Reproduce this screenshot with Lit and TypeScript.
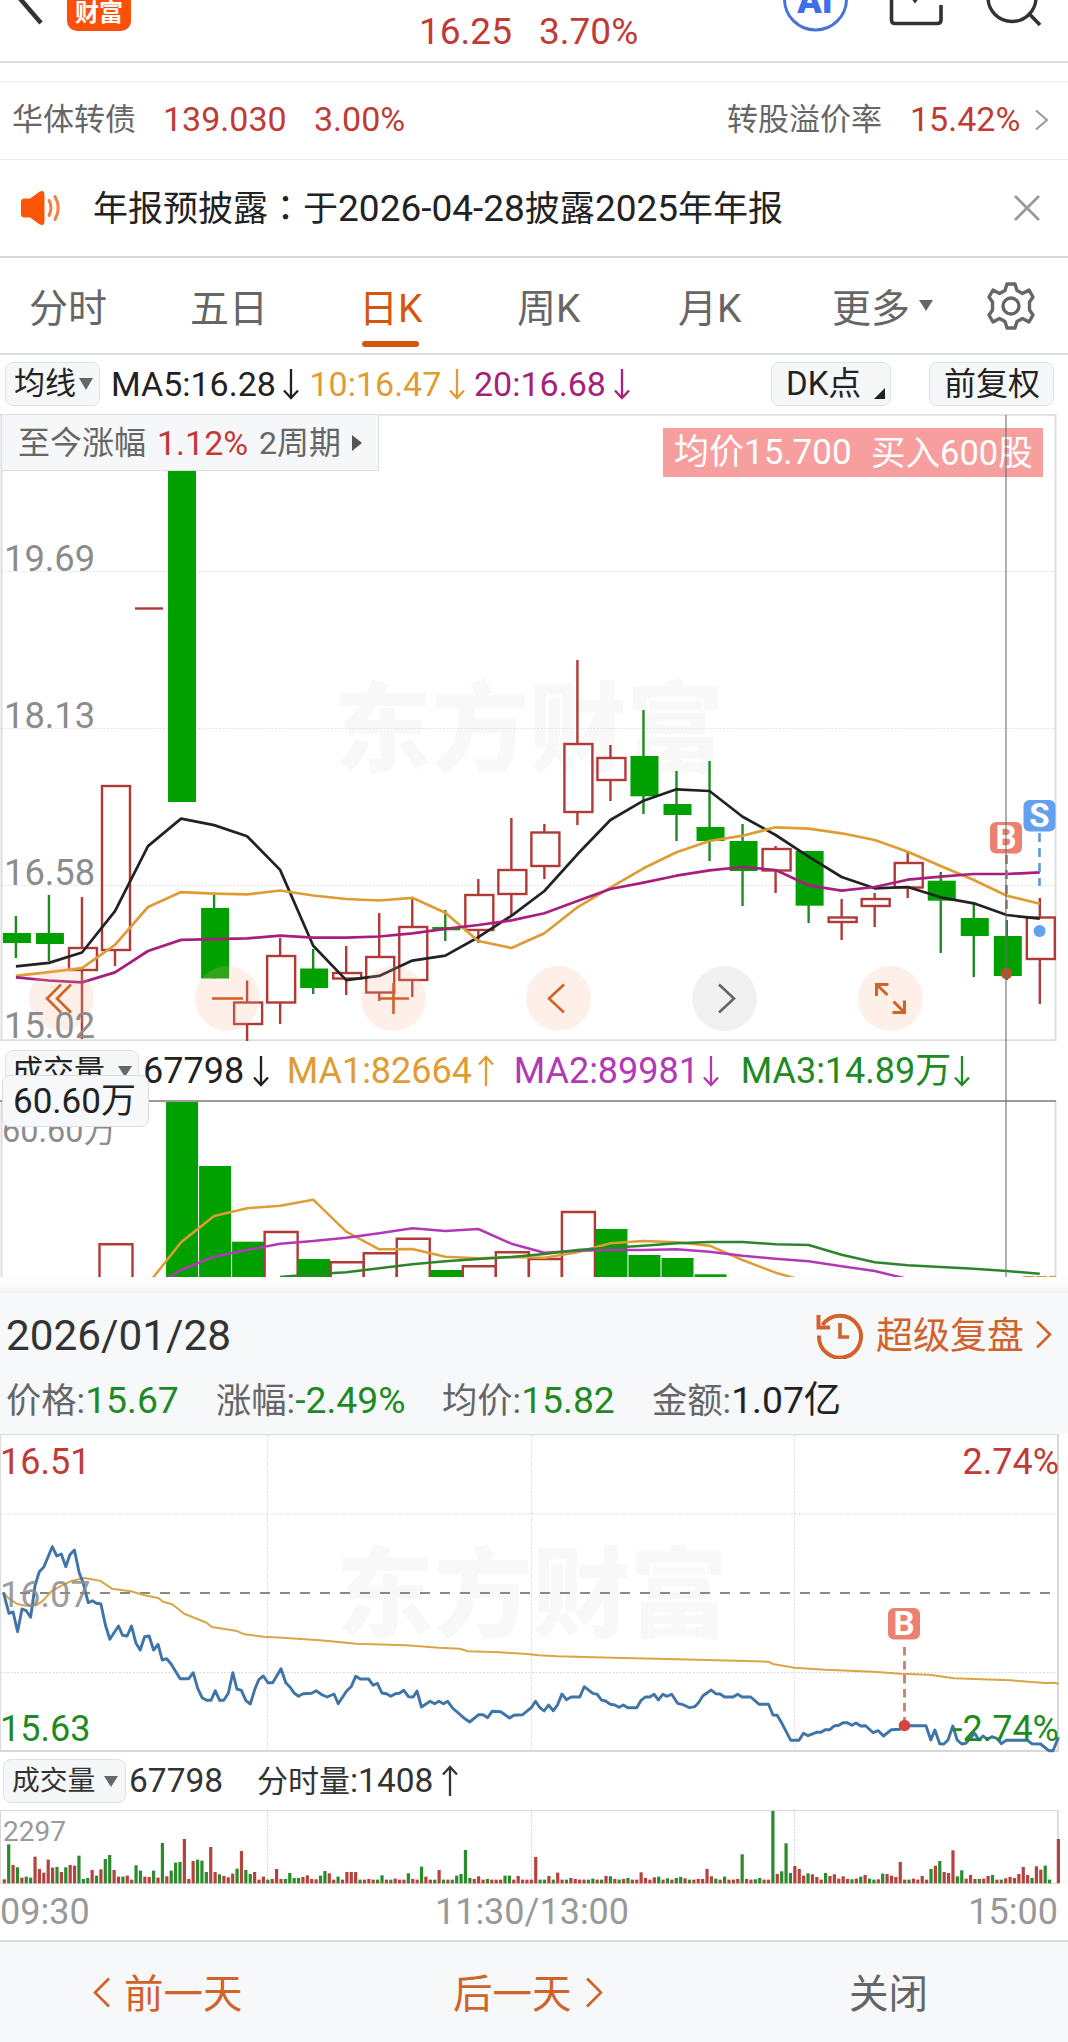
import { LitElement, html, svg, css } from "lit";
import { customElement } from "lit/decorators.js";

const RED = "#b03a37";
const GREEN = "#00a000";
const DEEP_GREEN = "#1f8a24";
const ORANGE = "#df9c35";
const MAGENTA = "#a81f7b";
const PURPLE = "#b338b8";

const STEP = 33.03;
const FIRST = 15.9;
const cx = (i: number) => FIRST + STEP * i;

type Candle = [up: 0 | 1, high: number, top: number, bottom: number, low: number];

const candles: Candle[] = [
  [0, 916, 933, 943, 958], [0, 895, 933, 944, 961], [1, 897, 948, 970, 1039], [1, 786, 786, 950, 966],
  [1, 608.5, 608.5, 608.5, 608.5], [0, 471, 471, 802, 802], [0, 895, 908, 978.5, 978.5], [1, 980.5, 1002.5, 1024, 1041],
  [1, 938, 956, 1002.5, 1024], [0, 949, 968.5, 988, 994], [1, 946, 973, 978.5, 995], [1, 913, 957, 992.5, 1001],
  [1, 897, 927, 980, 997], [0, 910, 927, 930.3, 941], [1, 879, 895, 930, 943], [1, 818, 870, 894, 915],
  [1, 824, 832.5, 866, 879], [1, 660, 744, 812, 825], [1, 745, 758, 780, 801], [0, 710, 756, 796.3, 814],
  [0, 771, 804, 815, 841], [0, 761, 827, 841, 861], [0, 824, 841, 871, 906], [1, 846, 849, 870.5, 893],
  [0, 851, 851, 905.7, 923], [1, 899, 917.5, 922, 940], [1, 893, 899, 906, 927], [1, 852, 863, 887.5, 898],
  [0, 872, 880.7, 900.7, 953], [0, 903, 918, 936, 977], [0, 920, 936, 976, 980], [1, 898, 917.5, 959, 1004],
];

const ma5 = [966.3, 962.9, 952.5, 911.2, 846.1, 818.6, 825.1, 836.2, 869.9, 945.7, 980.1, 975.9, 960.6, 955.6, 937.2, 915.8, 891, 854.3, 820, 800.7, 789.3, 791, 816.7, 835, 856.7, 877, 888.3, 887, 897.3, 903.3, 915, 918.7];
const ma10 = [975.9, 972.1, 968.2, 944.9, 907, 892.1, 893.6, 894.4, 890.5, 895.5, 899, 900.5, 897.8, 912.7, 941, 948, 933.3, 907.3, 887.7, 868.3, 852.3, 841, 835.7, 827.3, 828.7, 833.3, 840, 851.7, 866, 880, 895.7, 903.7];
const ma20 = [977.4, 980.5, 982.4, 972.4, 951, 939.9, 939.1, 938.4, 935.7, 937.6, 937.6, 936.5, 933.4, 928.8, 925, 920.4, 913.3, 901, 889, 882.7, 875.7, 870.3, 867, 870, 885.3, 890.7, 887, 879.7, 876.7, 874, 874, 872.3];

const volumeBars: [index: number, up: 0 | 1, top: number][] = [
  [3, 1, 1244.3], [5, 0, 1101], [6, 0, 1166], [7, 0, 1241.7], [8, 1, 1232], [9, 0, 1259], [10, 1, 1262.3],
  [11, 1, 1253.3], [12, 1, 1238.7], [13, 0, 1270], [14, 1, 1266.3], [15, 1, 1252.3], [16, 1, 1259], [17, 1, 1212],
  [18, 0, 1229], [19, 0, 1255], [20, 0, 1258], [21, 0, 1274.3],
];
const volMa1 = [1284, 1242.3, 1216, 1208.3, 1205.7, 1199.7, 1231.7, 1249.3, 1249, 1256.7, 1258.3, 1257, 1257.7, 1252.3, 1243.3, 1241, 1242.3, 1245.7, 1260, 1272.7, 1282];
const volMa2 = [1290, 1270, 1256.7, 1250, 1243.7, 1241, 1237.7, 1233.3, 1228.3, 1231, 1229, 1243.7, 1252.7, 1250.7, 1250, 1250, 1249.3, 1251.7, 1255.7, 1258.7, 1261.3, 1266.3, 1271, 1279];
const volMa3 = [1277, 1274.3, 1272.3, 1268.3, 1264.3, 1261.3, 1259, 1257, 1254, 1250, 1247.7, 1245.7, 1243.3, 1242, 1242, 1244.3, 1245, 1254.7, 1262.3, 1265.3, 1267, 1268.7, 1271, 1273.7];

const series = (values: number[], start = 0) => values.map((y, k) => `${cx(k + start).toFixed(1)},${y}`).join(" ");

/* Intraday samples: morning and afternoon halves, in thirds of a pixel. */
const scaled = (data: string, kx: number, dx: number) =>
  data.trim().split(/\s+/).map((p) => {
    const [x, y] = p.split(",").map(Number);
    return `${(x / kx + dx).toFixed(1)},${(1430 + y / 3).toFixed(1)}`;
  }).join(" ");

const priceAm = `10,487 26,550 38,546 51,605 64,537 76,542 89,562 102,466 114,425 127,412 152,350 165,378 178,372 191,410 203,374 216,360 230,428 242,460 256,518 268,512 280,520 293,522 306,585 319,628 344,588 356,616 369,618 382,588 395,640 407,660 420,620 433,618 446,660 459,643 471,690 484,686 497,702 523,746 548,746 561,728 574,775 587,803 600,811 613,811 625,782 638,811 650,811 663,790 676,728 688,777 701,781 714,812 727,822 740,778 752,748 765,738 778,758 792,758 816,716 830,758 842,771 855,790 867,799 880,791 905,790 918,782 935,794 950,801 970,792 982,821 1007,782 1020,770 1033,739 1046,747 1070,747 1084,766 1096,760 1109,789 1122,791 1135,799 1148,791 1160,790 1173,781 1186,800 1200,801 1211,783 1224,831 1249,814 1262,821 1275,814 1288,821 1300,814 1314,834 1352,868 1364,876 1390,854 1403,854 1416,863 1429,844 1454,845 1480,864 1492,856 1518,854 1543,833`;
const pricePm = `16,814 28,832 41,843 54,825 68,842 80,825 93,792 106,809 120,801 145,801 158,770 183,790 196,793 208,810 220,813 234,823 247,825 260,832 272,825 285,833 311,833 323,812 336,801 349,801 362,793 374,810 387,793 400,799 413,793 430,820 443,823 465,833 480,830 491,818 504,797 528,780 541,791 554,792 567,801 592,801 605,793 618,801 643,801 668,823 695,823 708,855 720,856 734,880 760,931 784,931 797,910 810,917 835,907 848,907 860,899 874,899 886,888 900,886 912,878 925,878 938,886 950,879 964,888 978,887 1000,908 1015,902 1030,918 1053,899 1078,898 1091,887 1154,887 1168,930 1180,900 1194,941 1206,942 1218,930 1232,888 1245,930 1258,942 1270,940 1296,910 1308,930 1320,918 1333,928 1346,920 1360,925 1374,941 1387,931 1450,931 1462,941 1488,942 1512,962 1524,962 1540,922`;
const avgAm = `10,487 25,505 50,522 75,527 105,526 125,512 150,483 180,466 210,452 245,444 290,452 325,476 380,484 420,496 460,504 473,515 500,523 535,551 600,578 615,591 685,602 710,613 765,620 820,623 930,631 1035,641 1180,646 1275,653 1335,656 1360,664 1450,667 1530,672`;
const avgPm = `25,676 80,679 240,683 400,687 600,692 695,695 708,702 770,713 860,719 1000,725 1080,731 1165,734 1235,745 1400,751 1500,759 1530,758 1540,762`;

const minuteVolumes = `r12 g117 r55 g48 r17 g20 g17 r80 r43 r32 r71 r47 g49 r34 g48 r55 r53 g83 g13 g16 r40 g23 r42 g73 g85 r40 r20 g20 r23 r11 g54 g38 r20 r19 g38 r17 g121 r21 g38 g62 g64 r133 r13 r67 g71 g68 g34 r109 r34 g27 r22 r18 r29 g44 r97 g40 g28 r34 r11 r20
g11 r13 r43 r13 g13 g31 g16 g16 r19 r24 r13 r12 g23 g37 r30 r11 g20 r11 r34 r34 r34 g11 r11 r13 r11 g11 g24 r11 g11 r14 r11 r11 g30 r13 r11 g50 r20 r11 g11 r40 g11 r11 g11 g23 g28 g100 g16 r13 r21 r11 g13 r11 r11 r11 g23 g23 r11 r22 r11 r11
r11 r79 g11 g11 r22 g11 r32 r11 g11 r16 r13 r11 r11 g11 g14 r11 g11 r22 g21 r13 g11 r13 g16 r11 r11 r33 r16 r11 r18 g20 r11 g15 r11 g16 g19 r15 g11 r11 r13 r13 r43 r21 g14 r11 g20 r11 r11 r13 g87 r13 r11 g12 g16 r11 r11 g217 r28 g36 g120 g31
r52 r43 r23 g30 r27 r19 r11 g31 r22 r27 r14 r21 r13 g12 r14 g20 r25 g14 g11 r12 g29 r28 r23 r19 r64 r11 g11 r14 r11 r22 r11 g43 r53 g67 r34 r31 r99 g21 g39 r14 r25 r13 g13 r14 r22 g25 r11 g11 r15 r19 r16 r28 r49 r25 g16 r51 r41 g53 g11 g0 r133`.trim().split(/\s+/);

const arrowDown = html`<svg class="arrow" width="16" height="32" viewBox="0 0 16 32"><path d="M8 1V30M1 22.500L8 30L15 22.500" /></svg>`;
const arrowUp = html`<svg class="arrow" width="16" height="32" viewBox="0 0 16 32"><path d="M8 31V2M1 9.500L8 2L15 9.500" /></svg>`;
const caret = (w: number, h: number) => html`<svg class="caret" width=${w} height=${h} viewBox="0 0 14 11" preserveAspectRatio="none"><path d="M0 0H14L7 11Z" /></svg>`;
const chevron = (dir: "l" | "r", w: number, h: number, weight: number) => html`
  <svg class="chev" width=${w} height=${h} viewBox="0 0 ${w} ${h}">
    <path stroke-width=${weight} d=${dir === "r" ? `M2 1.500L${w - 2} ${h / 2}L2 ${h - 1.5}` : `M${w - 2} 1.500L2 ${h / 2}L${w - 2} ${h - 1.5}`} />
  </svg>`;

const flag = (x: number, y: number, letter: string, color: string) => svg`
  <rect x=${x} y=${y} width="32" height="31.500" rx="6" fill=${color} />
  <text x=${x + 16} y=${y + 26.5} class="flag">${letter}</text>`;

@customElement("kline-chart")
export class KlineChart extends LitElement {
  static styles = css`
    :host { display: block; }
    svg { display: block; }
    text { font-family: Roboto, "Noto Sans CJK SC", sans-serif; }
    .axis { font-size: 36.3px; fill: #8c8c8c; }
    .mark { font-size: 97.5px; font-weight: 900; fill: #f8f8f8; font-family: "Noto Sans CJK SC", sans-serif; }
    .flag { font-size: 33px; font-weight: 700; fill: #fff; text-anchor: middle; }
    .ctl { fill: none; stroke: #d0622a; stroke-width: 2.6; }
    .line { fill: none; stroke-width: 2.7; stroke-linejoin: round; }
  `;

  private candle([up, high, top, bottom, low]: Candle, i: number) {
    const x = cx(i);
    if (!up) {
      return svg`<path d="M${x} ${high}V${low}" stroke=${DEEP_GREEN} stroke-width="2.400" />
        <rect x=${x - 13} y=${top} width="28" height=${bottom - top} fill=${GREEN} />`;
    }
    if (top === bottom) return svg`<path d="M${x - 13} ${top}h28" stroke=${RED} stroke-width="2.400" />`;
    return svg`<path d="M${x} ${high}V${top}M${x} ${bottom}V${low}" stroke=${RED} stroke-width="2.400" />
      <rect x=${x - 13} y=${top} width="28" height=${bottom - top} fill="none" stroke=${RED} stroke-width="2.400" />`;
  }

  render() {
    return html`<svg width="1068" height="627" viewBox="0 414 1068 627">
      <text x="334" y="764" class="mark">东方财富</text>
      <g stroke="#e4e4e4" stroke-dasharray="2 1.500">
        <path d="M2 571.500H1055M2 728.500H1055M2 885.500H1055" />
      </g>
      <path d="M0 414.800H1056M1.500 414V1041M1055.500 414V1041M0 1040.200H1056" stroke="#dedede" stroke-width="2" fill="none" />
      ${candles.map((c, i) => this.candle(c, i))}
      <polyline class="line" stroke="#222" points=${series(ma5)} />
      <polyline class="line" stroke=${ORANGE} points=${series(ma10)} />
      <polyline class="line" stroke=${MAGENTA} points=${series(ma20)} />
      <g fill="#f8b48c" fill-opacity=".2">
        ${[61.3, 227.3, 393.4, 558.5, 890.5].map((x) => svg`<circle cx=${x} cy="998.500" r="32.400" />`)}
      </g>
      <circle cx="724.600" cy="998.500" r="32.400" fill="#f1f1f1" />
      <g class="ctl">
        <path d="M61 984.500L47 998.500L61 1012.500M71 984.500L57 998.500L71 1012.500" />
        <path d="M212 998.500H243" />
        <path d="M378 998.500H409M393.500 983V1014" />
        <path d="M564 984.500L549 998.500L564 1012.500" />
        <path d="M719 984.500L734 998.500L719 1012.500" stroke="#666" />
        <path stroke-width="3" d="M876.500 996V984.500H888.500M877 985L887.500 995M892.500 1012.500H904.500V1000.500M893.500 1001.500L904 1012" />
      </g>
      <text x="4" y="571" class="axis">19.69</text>
      <text x="4" y="728" class="axis">18.13</text>
      <text x="4" y="885" class="axis">16.58</text>
      <text x="4" y="1038" class="axis">15.02</text>
      <path d="M1006.500 855V912" stroke="#b3716c" stroke-width="2.600" stroke-dasharray="9 6" />
      <path d="M1039.500 833V886" stroke="#5b9bdc" stroke-width="2.600" stroke-dasharray="9 6" />
      ${flag(990, 822, "B", "#ee8072")}
      ${flag(1023.5, 800, "S", "#64a0f0")}
      <circle cx="1006.500" cy="973.500" r="5.800" fill="#b4532a" />
      <circle cx="1039.600" cy="931" r="6" fill="#64a0f0" />
    </svg>`;
  }
}

@customElement("volume-chart")
export class VolumeChart extends LitElement {
  static styles = css`
    :host { display: block; }
    svg { display: block; }
    text { font-family: Roboto, "Noto Sans CJK SC", sans-serif; font-size: 32.5px; fill: #8c8c8c; }
    .line { fill: none; stroke-width: 2.5; stroke-linejoin: round; }
  `;
  render() {
    return html`<svg width="1068" height="177" viewBox="0 1100 1068 177">
      <text x="2" y="1142">60.60万</text>
      <path d="M1.500 1101V1277M1055.500 1101V1277" stroke="#dedede" stroke-width="2" />
      ${volumeBars.map(([i, up, top]) => {
        const x = cx(i) - 15.5;
        return up
          ? svg`<path d="M${x} 1280V${top}h33V1280" fill="none" stroke=${RED} stroke-width="2.400" />`
          : svg`<rect x=${x + 0.5} y=${top} width="32" height=${1280 - top} fill=${GREEN} />`;
      })}
      <path d="M0 1101H1056" stroke="#9a9a9a" stroke-width="2" />
      <polyline class="line" stroke=${ORANGE} points=${series(volMa1, 4)} />
      <polyline class="line" stroke=${PURPLE} points=${series(volMa2, 4)} />
      <polyline class="line" stroke="#2c842c" points=${series(volMa3, 8)} />
      <path d="M1023 1276.500h33" stroke="#c8a23c" stroke-dasharray="11 2" />
    </svg>`;
  }
}

@customElement("intraday-chart")
export class IntradayChart extends LitElement {
  static styles = css`
    :host { display: block; }
    svg { display: block; }
    text { font-family: Roboto, "Noto Sans CJK SC", sans-serif; font-size: 36px; }
    .mark { font-size: 98px; font-weight: 900; fill: #f8f8f8; font-family: "Noto Sans CJK SC", sans-serif; }
    .flag { font-size: 33px; font-weight: 700; fill: #fff; text-anchor: middle; }
    .up { fill: #c03a36; }
    .down { fill: #1f8a24; }
    .mid { fill: #8c8c8c; fill-opacity: .85; }
    .end { text-anchor: end; }
    .line { fill: none; stroke-linejoin: round; }
  `;
  render() {
    return html`<svg width="1068" height="320" viewBox="0 1433 1068 320">
      <text x="336" y="1629" class="mark">东方财富</text>
      <path d="M0 1514H1057M0 1672.500H1057M267.500 1435V1750M531.500 1435V1750M794.500 1435V1750" stroke="#dcdcdc" stroke-dasharray="2 1.500" />
      <path d="M0 1434.500H1058M.500 1434V1751" stroke="#dcdfe2" stroke-width="1.300" />
      <path d="M1058 1434V1751M0 1751H1059" stroke="#d8d8d8" stroke-width="2" />
      <path d="M20 1593H1057" stroke="#888" stroke-width="2" stroke-dasharray="10 10" />
      <polyline class="line" stroke="#d9a548" stroke-width="2" points="${scaled(avgAm, 2.904, 0)} ${scaled(avgPm, 2.914, 530)}" />
      <polyline class="line" stroke="#3f74a8" stroke-width="2.900" points="${scaled(priceAm, 2.904, 0)} ${scaled(pricePm, 2.914, 530)}" />
      <text x="0" y="1473.500" class="up">16.51</text>
      <text x="0" y="1606.500" class="mid">16.07</text>
      <text x="0" y="1741" class="down">15.63</text>
      <text x="1059" y="1473.500" class="up end">2.74%</text>
      <text x="1059" y="1741" class="down end">-2.74%</text>
      <path d="M904.500 1647V1722" stroke="#cf7c72" stroke-width="2.800" stroke-dasharray="8.500 5.500" />
      ${flag(888, 1608, "B", "#ee8072")}
      <circle cx="904.500" cy="1725.500" r="5.800" fill="#d8453f" />
    </svg>`;
  }
}

@customElement("minute-volume")
export class MinuteVolume extends LitElement {
  static styles = css`
    :host { display: block; }
    svg { display: block; }
    text { font-family: Roboto, sans-serif; font-size: 28px; fill: #9a9a9a; }
  `;
  render() {
    return html`<svg width="1068" height="75" viewBox="0 1810 1068 75">
      <path d="M0 1810.500H1058M.500 1810V1883" stroke="#dadada" />
      <path d="M1058 1810V1883" stroke="#dedede" stroke-width="2" />
      <path d="M267.500 1811V1883M531.500 1811V1883M794.500 1811V1883" stroke="#d4d4d4" stroke-dasharray="2 1.500" />
      <text x="3" y="1840.500">2297</text>
      <path d="M0 1883.500H1058" stroke="#ecd5cc" />
      ${minuteVolumes.map((item, k) => {
        const h = Number(item.slice(1)) / 3;
        return svg`<rect x=${2.7 + k * 4.392} y=${1883.3 - h} width="3.200" height=${h} fill=${item[0] === "r" ? "#b2433f" : "#2a8a2c"} />`;
      })}
    </svg>`;
  }
}

@customElement("app-root")
export class AppRoot extends LitElement {
  static styles = css`
    :host {
      display: block; width: 1068px; height: 2042px; overflow: hidden; background: #fff; color: #222;
      font-family: Roboto, "Noto Sans CJK SC", sans-serif; font-size: 34px; line-height: 1.2; white-space: nowrap;
    }
    * { box-sizing: border-box; }
    svg { display: block; flex: none; }
    .red { color: #c03a36; }
    .green { color: #1f8a24; }
    .grey { color: #666; }
    .arrow { fill: none; stroke: currentColor; stroke-width: 2.3; }
    .caret { fill: #666; }
    .chev { fill: none; stroke: currentColor; }

    .top { height: 63px; border-bottom: 2px solid #d6dada; display: grid; grid-template-columns: 67px 352px 120px 243px 107px 97px auto; align-items: start; }
    .brand { width: 64px; height: 31px; border-radius: 0 0 10px 10px; background: #fc4f08; color: #fff; font-size: 24px; font-weight: 700; line-height: 26px; text-align: center; overflow: hidden; }
    .quote { font-size: 37px; line-height: 63px; }
    .ai { font-size: 36px; font-weight: 900; fill: #3f6fe8; }

    .spacer { height: 19px; border-bottom: 1px solid #ececec; }
    .bond { height: 78px; border-bottom: 1px solid #ececec; display: grid; grid-template-columns: 151px 151px 413px 183px 124px auto; padding: 0 0 2px 12px; align-items: center; }
    .bond .grey { font-size: 31px; }
    .bond .chev { color: #999; }

    .notice { height: 98px; border-bottom: 2px solid #d6dada; display: grid; grid-template-columns: 74px 920px auto; padding-left: 19px; align-items: center; font-size: 35px; }
    .num { font-size: 37px; }
    .colon { font-family: "Noto Sans CJK TC", sans-serif; }

    .tabs { height: 97px; border-bottom: 2px solid #d6dada; display: grid; grid-template-columns: 161px 171px 156px 161px 154px 87px 67px auto; padding-left: 29px; font-size: 39px; color: #666; align-items: center; }
    .tab { line-height: 103px; height: 95px; position: relative; }
    .tab.on { color: #d4570f; text-indent: -2px; }
    .tab.on::after { content: ""; position: absolute; left: 1px; bottom: 6px; width: 57px; height: 6px; border-radius: 3px; background: #d4570f; }

    .legend { height: 59px; display: grid; grid-template-columns: 95px 183px 23px 143px 25px 140px 157px 158px auto; padding: 0 0 1px 5px; align-items: center; }
    .pill { height: 44px; border: 1.5px solid #dfe3e6; border-radius: 8px; background: #f6f7f9; display: flex; align-items: center; font-size: 31px; line-height: 40px; }
    .legend .pill:first-child { width: 95px; padding-left: 8px; gap: 3px; }
    .legend > .first { padding-left: 11px; }
    .legend .dk { width: 120px; padding-left: 14px; gap: 13px; font-size: 33px; }
    .corner { margin-top: 18px; }
    .legend .adj { width: 125px; padding-left: 14px; font-size: 32px; }
    .orange { color: #df9c35; }
    .magenta { color: #a81f7b; }
    .purple { color: #b338b8; }

    .stage { position: relative; height: 863px; overflow: hidden; }
    .gain { position: absolute; left: 2px; top: 1px; width: 377px; height: 56px; background: #f6f7f9; border: 1px solid #dedfe2; border-width: 0 1.5px 1.5px 0; display: grid; grid-template-columns: 139px 102px 93px auto; padding: 1px 0 0 16px; align-items: center; font-size: 32px; color: #666; }
    .gain .red { font-size: 34px; }
    .trade { position: absolute; left: 663px; top: 14px; width: 380px; height: 49px; background: #f79f9e; color: #fff; display: grid; grid-template-columns: 197px auto; padding-left: 11px; font-size: 35px; line-height: 50px; }
    .trade span:last-child { font-size: 34.5px; }
    .cross { position: absolute; left: 1005px; top: 1px; width: 2px; bottom: 0; background: rgba(110, 110, 110, .55); }

    .vlegend { height: 59px; display: grid; grid-template-columns: 138px 110px 30px 195px 32px 193px 34px 217px auto; padding: 2px 0 0 5px; font-size: 36px; align-items: center; }
    .vlegend .pill { width: 134px; gap: 13px; padding-left: 6px; }
    .vlegend .arrow { margin-top: -2px; }
    .tip { position: absolute; left: 2px; top: 661px; width: 147px; height: 52px; background: #f7f8fa; border: 1.5px solid #dcdfe2; border-radius: 8px; font-size: 35px; line-height: 51px; padding-left: 10px; }

    .shade { height: 16px; background: linear-gradient(#fdfdfd 10%, #fafafa 55%, #f0f1f1); }
    .head { height: 140px; background: #f6f8fa; padding: 13px 0 0 6px; }
    .date { height: 60px; display: grid; grid-template-columns: 810px 60px 159px auto; align-items: center; font-size: 42.3px; color: #333; }
    .date .link { font-size: 37px; color: #d0622a; padding-top: 3px; }
    .date svg { margin-top: -3px; }
    .date .chev { color: #d0622a; }
    .stats { height: 52px; margin-top: 8px; display: grid; grid-template-columns: 210px 226px 210px auto; font-size: 37.3px; line-height: 52px; align-items: start; }
    .stats .grey { font-size: 35.3px; }

    .mlegend { height: 57px; display: grid; grid-template-columns: 126px 128px 185px auto; padding: 0 0 1px 3px; align-items: center; font-size: 33.5px; color: #333; }
    .mlegend .pill { width: 123px; gap: 9px; padding-left: 8px; font-size: 27.8px; }
    .mlegend .cn { font-size: 31px; }
    .times { height: 55px; display: flex; justify-content: space-between; padding: 0 10px 0 0; font-size: 36px; line-height: 55px; color: #999; }
    .times .mid { padding-left: 6px; }
    .foot { height: 102px; background: #f6f8fa; border-top: 2px solid #d8dadb; display: grid; grid-template-columns: 31px 329px 132px 264px auto; padding: 6px 0 0 93px; align-items: center; font-size: 39.5px; color: #d0622a; }
    .foot .chev { margin-top: -5px; }
  `;

  render() {
    return html`
      <header class="top">
        <svg width="60" height="30" viewBox="0 0 60 30"><path d="M16 -6L41 23" stroke="#333" stroke-width="4.500" fill="none" /></svg>
        <div class="brand">财富</div>
        <span class="quote red">16.25</span>
        <span class="quote red">3.70%</span>
        <svg width="70" height="34" viewBox="0 0 70 34">
          <circle cx="33.500" cy="-1" r="31" fill="#fff" stroke="#4573d8" stroke-width="3" />
          <text x="33" y="12.500" text-anchor="middle" class="ai">AI</text>
        </svg>
        <svg width="60" height="30" viewBox="0 0 60 30"><path d="M2.500 -4V20Q2.500 23.500 6 23.500H48Q52 23.500 52 20V5M24 -2L26 .500L28 -2" stroke="#333" stroke-width="3.600" fill="none" /></svg>
        <svg width="70" height="30" viewBox="0 0 70 30"><circle cx="26" cy="-2.500" r="24" stroke="#333" stroke-width="3.400" fill="none" /><path d="M42.500 13L54 25" stroke="#333" stroke-width="3.600" /></svg>
      </header>
      <div class="spacer"></div>
      <div class="bond">
        <span class="grey">华体转债</span><span class="red">139.030</span><span class="red">3.00%</span>
        <span class="grey">转股溢价率</span><span class="red">15.42%</span>${chevron("r", 15, 22, 2)}
      </div>
      <div class="notice">
        <svg width="46" height="36" viewBox="0 0 46 36">
          <path d="M2 12Q2 8.500 5.500 8.500H11L20 2Q25.500 -1 25.500 5V31Q25.500 37 20 34L11 27.500H5.500Q2 27.500 2 24Z" fill="#fb5607" />
          <path d="M30 10.500Q34 18 30 25.500M36 6.500Q42.500 18 36 29.500" fill="none" stroke="#f08040" stroke-width="3" stroke-linecap="round" />
        </svg>
        <span>年报预披露<span class="colon">：</span>于<span class="num">2026-04-28</span>披露<span class="num">2025</span>年年报</span>
        <svg width="28" height="28" viewBox="0 0 28 28"><path d="M2 2L26 26M26 2L2 26" stroke="#999" stroke-width="2.800" /></svg>
      </div>
      <nav class="tabs">
        <span class="tab">分时</span><span class="tab">五日</span><span class="tab on">日K</span>
        <span class="tab">周K</span><span class="tab">月K</span><span class="tab">更多</span>
        ${caret(14, 11)}
        <svg width="50" height="50" viewBox="0 0 50 50" fill="none" stroke="#666" stroke-width="3.400" stroke-linejoin="round">
          <path d="M21 3H29L31 9.500L36.500 12.500L43 9L47 16L43.500 21V29L47 34L43 41L36.500 37.500L31 40.500L29 47H21L19 40.500L13.500 37.500L7 41L3 34L6.500 29V21L3 16L7 9L13.500 12.500L19 9.500Z" />
          <circle cx="25" cy="25" r="8" />
        </svg>
      </nav>
      <div class="legend">
        <div class="pill">均线${caret(14, 12)}</div>
        <span class="first">MA5:16.28</span>${arrowDown}
        <span class="orange">&#8202;10:16.47</span><span class="orange">${arrowDown}</span>
        <span class="magenta">20:16.68</span><span class="magenta">${arrowDown}</span>
        <div class="pill dk">DK点<svg width="11" height="11" viewBox="0 0 11 11" class="corner"><path d="M11 0V11H0Z" fill="#222" /></svg></div>
        <div class="pill adj">前复权</div>
      </div>

      <section class="stage">
        <kline-chart></kline-chart>
        <div class="vlegend">
          <div class="pill">成交量${caret(14, 11)}</div>
          <span>67798</span>${arrowDown}
          <span class="orange">&#8202;MA1:82664</span><span class="orange">${arrowUp}</span>
          <span class="purple">&#8202;MA2:89981</span><span class="purple">${arrowDown}</span>
          <span class="green">&#8202;MA3:14.89万</span><span class="green">${arrowDown}</span>
        </div>
        <volume-chart></volume-chart>
        <div class="gain">
          <span>至今涨幅</span><span class="red">1.12%</span><span>2周期</span>
          <svg width="10" height="16" viewBox="0 0 10 16"><path d="M0 0L10 8L0 16Z" fill="#555" /></svg>
        </div>
        <div class="trade"><span>均价15.700</span><span>买入600股</span></div>
        <div class="tip">60.60万</div>
        <div class="cross"></div>
      </section>

      <div class="shade"></div>
      <div class="head">
        <div class="date">
          <span>2026/01/28</span>
          <svg width="48" height="48" viewBox="0 0 48 48" fill="none" stroke="#d0622a" stroke-width="4">
            <path d="M6.500 14A21 21 0 1 1 3 24.500" /><path d="M2.500 4V16.500H14" /><path d="M24 12V26H33" stroke-width="3.600" />
          </svg>
          <span class="link">超级复盘</span>${chevron("r", 17, 29, 2.6)}
        </div>
        <div class="stats">
          <span><span class="grey">价格:</span><span class="green">15.67</span></span>
          <span><span class="grey">涨幅:</span><span class="green">-2.49%</span></span>
          <span><span class="grey">均价:</span><span class="green">15.82</span></span>
          <span><span class="grey">金额:</span>1.07亿</span>
        </div>
      </div>
      <intraday-chart></intraday-chart>
      <div class="mlegend">
        <div class="pill">成交量${caret(14, 11)}</div>
        <span>67798</span><span><span class="cn">分时量</span>:1408</span>${arrowUp}
      </div>
      <minute-volume></minute-volume>
      <div class="times"><span>09:30</span><span class="mid">11:30/13:00</span><span>15:00</span></div>
      <footer class="foot">
        ${chevron("l", 18, 31, 2.6)}<span>前一天</span><span>后一天</span>${chevron("r", 18, 31, 2.6)}<span class="grey">关闭</span>
      </footer>
    `;
  }
}
